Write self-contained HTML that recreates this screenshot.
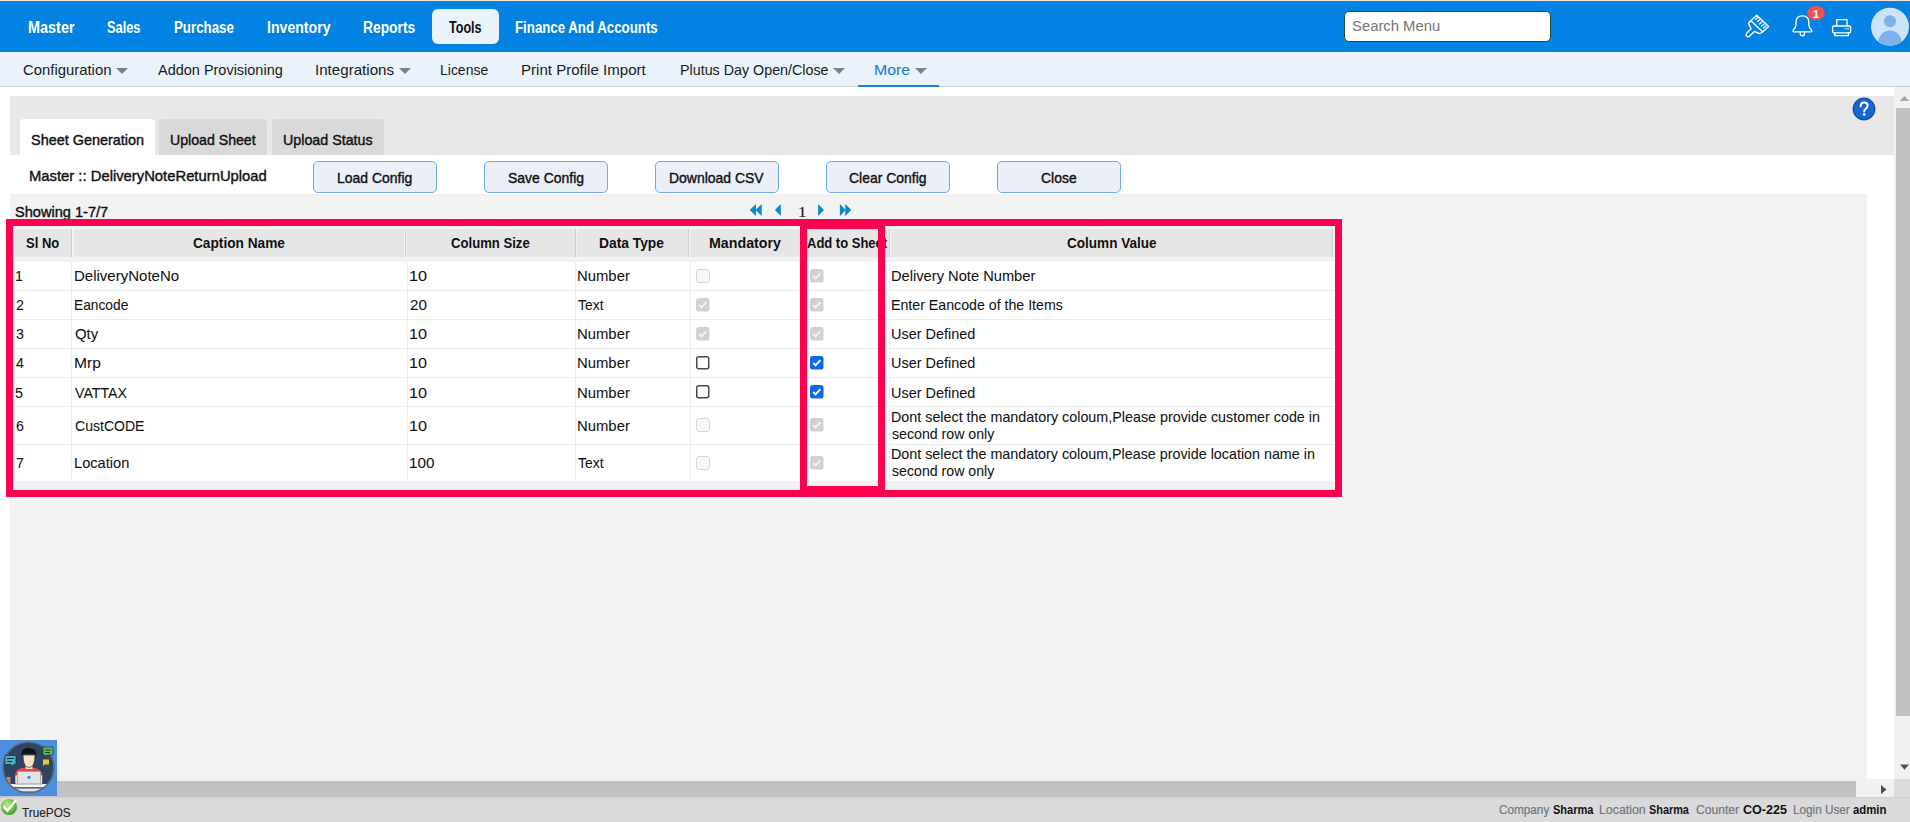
<!DOCTYPE html><html><head><meta charset="utf-8"><style>
*{margin:0;padding:0;box-sizing:border-box}
html,body{width:1910px;height:822px;overflow:hidden;background:#fff;font-family:'Liberation Sans', sans-serif;color:#111}
.ab{position:absolute}
.t{position:absolute;white-space:nowrap;transform-origin:0 0;-webkit-text-stroke:0.4px}
.caret{position:absolute;width:0;height:0;border-left:6.5px solid transparent;border-right:6.5px solid transparent;border-top:6.5px solid #7c808a}
.tab{position:absolute;top:119px;height:36px;border-radius:4px 4px 0 0;background:#d9d9d9}
.btn{position:absolute;top:161px;width:124px;height:32px;border:1px solid #72a8ee;border-radius:5px;background:#eaeff8}
.hc{position:absolute;top:229px;height:28px;background:#e6e6e6}
.hs{position:absolute;top:229px;height:28px;width:1px;background:#cfcfcf}
.red{position:absolute;border:7px solid #ff0050}

</style></head><body>
<div class="ab" style="left:0;top:0;width:1910px;height:1px;background:#efe7dc"></div>
<div class="ab" style="left:0;top:1px;width:1910px;height:51px;background:#0283e3"></div>
<div class="ab" style="left:432px;top:9px;width:67px;height:35px;background:#eaf2fb;border-radius:6px"></div>
<div class="ab" style="left:1344px;top:11px;width:207px;height:31px;background:#fff;border:1px solid #1e5130;border-radius:5px"></div>
<svg class="ab" style="left:1740px;top:2px" width="170" height="48" viewBox="1740 2 170 48">
<g fill="none" stroke="#fff" stroke-width="1.35" stroke-linejoin="round" stroke-linecap="round">
<path d="M1756.7 15.3 L1768.6 26.5 L1762.6 31.9 Q1760.8 33.8 1758.8 33.4 L1754.4 31.4 L1749.6 36 Q1747.8 37.4 1746.6 36 Q1745.6 34.6 1747 32.8 L1751.1 28.7 L1748.9 24.4 Q1748.2 22.6 1750.5 21.1 Z"/>
<path d="M1751.2 21 L1762.6 31.7"/>
<path d="M1755.6 19.3 L1757.9 17.5 M1757.5 21.6 L1759.8 19.7 M1759.5 23.9 L1761.8 22 M1761.6 26.1 L1763.9 24.2 M1763.5 28.1 L1765.9 26.1" stroke-width="1.3"/>
<path d="M1796 25.2 L1796 22 Q1796 15.8 1802.4 15.8 Q1808.8 15.8 1808.8 22 L1808.8 25.2 Q1809.4 28 1811.4 30 Q1812.6 31.8 1810.6 31.8 L1794.2 31.8 Q1792.2 31.8 1793.4 30 Q1795.4 28 1796 25.2 Z"/>
<path d="M1800.3 32.2 L1800.3 33.8 Q1800.3 35.8 1802.4 35.8 Q1804.5 35.8 1804.5 33.8 L1804.5 32.2"/>
<path d="M1836.6 26 L1836.8 19.6 L1847 19.6 L1847.2 26"/>
<path d="M1834 26 L1849.2 26 Q1850.6 26 1850.6 27.5 L1850.6 31.4 Q1850.6 32.8 1849.2 32.8 L1834 32.8 Q1832.6 32.8 1832.6 31.4 L1832.6 27.5 Q1832.6 26 1834 26 Z"/>
<path d="M1834.8 32.8 L1834.8 35.6 L1848.4 35.6 L1848.4 32.8"/>
<path d="M1845.2 28.8 L1845.8 28.8 M1847.4 28.8 L1848.4 28.8" stroke-width="1"/>
</g>
<ellipse cx="1816" cy="13" rx="9" ry="7.2" fill="#f05252"/>
<text x="1816" y="17.5" font-family="Liberation Sans" font-weight="bold" font-size="11" fill="#fff" text-anchor="middle">1</text>
<circle cx="1890" cy="26.8" r="19" fill="#cde3f9"/>
<clipPath id="av"><circle cx="1890" cy="26.8" r="19"/></clipPath>
<circle cx="1890" cy="21.3" r="6" fill="#7db2ea"/>
<ellipse cx="1890" cy="43" rx="11.8" ry="12.5" fill="#7db2ea" clip-path="url(#av)"/>
</svg>
<div class="ab" style="left:0;top:52px;width:1910px;height:35px;background:#eaf2fb;border-bottom:1px solid #c4d4df"></div>
<div class="caret" style="left:115.6px;top:68px"></div>
<div class="caret" style="left:398.8px;top:68px"></div>
<div class="caret" style="left:833px;top:68px"></div>
<div class="caret" style="left:915px;top:68px"></div>
<div class="ab" style="left:858px;top:84.7px;width:81px;height:2.3px;background:#1a80e0"></div>
<div class="ab" style="left:10px;top:96px;width:1884px;height:59px;background:#e8e8e8"></div>
<svg class="ab" style="left:1852px;top:97px" width="25" height="25" viewBox="0 0 25 25"><circle cx="12" cy="12" r="10.8" fill="#1766d1" stroke="#0f4d98" stroke-width="1.2"/><path d="M8.6 9.2 Q8.6 5.6 12.1 5.6 Q15.6 5.6 15.6 8.8 Q15.6 10.6 13.6 11.8 Q12.2 12.6 12.2 14.6" fill="none" stroke="#fff" stroke-width="2" stroke-linecap="round"/><circle cx="12.2" cy="17.6" r="1.25" fill="#fff"/></svg>
<div class="tab" style="left:20px;width:135px;background:#fff"></div>
<div class="tab" style="left:159px;width:108px"></div>
<div class="tab" style="left:272px;width:112px"></div>
<div class="btn" style="left:313px"></div>
<div class="btn" style="left:484px"></div>
<div class="btn" style="left:655px"></div>
<div class="btn" style="left:826px"></div>
<div class="btn" style="left:997px"></div>
<div class="ab" style="left:10px;top:194px;width:1857px;height:586px;background:#f2f2f2"></div>
<div class="ab" style="left:1867px;top:155px;width:27px;height:624px;background:#fff"></div>
<svg class="ab" style="left:740px;top:196px" width="120" height="28" viewBox="740 196 120 28">
<g fill="#078ac9">
<polygon points="749.7,210 756,204 756,216"/><polygon points="755.5,210 761.7,204 761.7,216"/>
<polygon points="774.9,210 780.8,204 780.8,216"/>
<polygon points="823.9,210 818.1,204 818.1,216"/>
<polygon points="845.7,210 839.9,204 839.9,216"/><polygon points="851.2,210 845.3,204 845.3,216"/>
</g></svg>
<div class="hc" style="left:14.6px;width:56.4px"></div>
<div class="hs" style="left:71px"></div>
<div class="hc" style="left:73.8px;width:330.7px"></div>
<div class="hs" style="left:404.5px"></div>
<div class="hc" style="left:406.7px;width:167.90000000000003px"></div>
<div class="hs" style="left:574.6px"></div>
<div class="hc" style="left:576.5px;width:111.0px"></div>
<div class="hs" style="left:687.5px"></div>
<div class="hc" style="left:690.1px;width:109.89999999999998px"></div>
<div class="hs" style="left:800px"></div>
<div class="hc" style="left:803px;width:85.5px"></div>
<div class="hs" style="left:888.5px"></div>
<div class="hc" style="left:890.6px;width:441.4px"></div>
<div class="hs" style="left:1332px"></div>
<div class="ab" style="left:14.6px;top:262px;width:1319px;height:219px;background:#fff"></div>
<div class="ab" style="left:14.6px;top:290px;width:1319px;height:1px;background:#ebebeb"></div>
<div class="ab" style="left:14.6px;top:319px;width:1319px;height:1px;background:#ebebeb"></div>
<div class="ab" style="left:14.6px;top:348px;width:1319px;height:1px;background:#ebebeb"></div>
<div class="ab" style="left:14.6px;top:377px;width:1319px;height:1px;background:#ebebeb"></div>
<div class="ab" style="left:14.6px;top:406px;width:1319px;height:1px;background:#ebebeb"></div>
<div class="ab" style="left:14.6px;top:444px;width:1319px;height:1px;background:#ebebeb"></div>
<div class="ab" style="left:71px;top:262px;width:1px;height:219px;background:#efefef"></div>
<div class="ab" style="left:407px;top:262px;width:1px;height:219px;background:#efefef"></div>
<div class="ab" style="left:575px;top:262px;width:1px;height:219px;background:#efefef"></div>
<div class="ab" style="left:690px;top:262px;width:1px;height:219px;background:#efefef"></div>
<div class="ab" style="left:803px;top:262px;width:1px;height:219px;background:#efefef"></div>
<div class="ab" style="left:889px;top:262px;width:1px;height:219px;background:#efefef"></div>
<svg class="ab" style="left:696px;top:269px" width="14" height="14" viewBox="0 0 14 14"><rect x="0.5" y="0.5" width="13" height="13" rx="2.5" fill="#f7f7f7" stroke="#d6d6d6"/></svg>
<svg class="ab" style="left:810px;top:269px" width="14" height="14" viewBox="0 0 14 14"><rect x="0" y="0" width="13.5" height="13.5" rx="2.5" fill="#d1d1d1"/><path d="M3.2 7 L5.6 9.4 L10.4 4.2" stroke="#f4f4f4" stroke-width="1.8" fill="none"/></svg>
<svg class="ab" style="left:696px;top:298px" width="14" height="14" viewBox="0 0 14 14"><rect x="0" y="0" width="13.5" height="13.5" rx="2.5" fill="#d1d1d1"/><path d="M3.2 7 L5.6 9.4 L10.4 4.2" stroke="#f4f4f4" stroke-width="1.8" fill="none"/></svg>
<svg class="ab" style="left:810px;top:298px" width="14" height="14" viewBox="0 0 14 14"><rect x="0" y="0" width="13.5" height="13.5" rx="2.5" fill="#d1d1d1"/><path d="M3.2 7 L5.6 9.4 L10.4 4.2" stroke="#f4f4f4" stroke-width="1.8" fill="none"/></svg>
<svg class="ab" style="left:696px;top:327px" width="14" height="14" viewBox="0 0 14 14"><rect x="0" y="0" width="13.5" height="13.5" rx="2.5" fill="#d1d1d1"/><path d="M3.2 7 L5.6 9.4 L10.4 4.2" stroke="#f4f4f4" stroke-width="1.8" fill="none"/></svg>
<svg class="ab" style="left:810px;top:327px" width="14" height="14" viewBox="0 0 14 14"><rect x="0" y="0" width="13.5" height="13.5" rx="2.5" fill="#d1d1d1"/><path d="M3.2 7 L5.6 9.4 L10.4 4.2" stroke="#f4f4f4" stroke-width="1.8" fill="none"/></svg>
<svg class="ab" style="left:696px;top:356px" width="14" height="14" viewBox="0 0 14 14"><rect x="0.75" y="0.75" width="12" height="12" rx="2" fill="#fff" stroke="#4a4a4a" stroke-width="1.5"/></svg>
<svg class="ab" style="left:810px;top:356px" width="14" height="14" viewBox="0 0 14 14"><rect x="0" y="0" width="13.5" height="13.5" rx="2.5" fill="#0b68e6"/><path d="M3.2 7 L5.6 9.4 L10.4 4.2" stroke="#fff" stroke-width="1.9" fill="none"/></svg>
<svg class="ab" style="left:696px;top:385px" width="14" height="14" viewBox="0 0 14 14"><rect x="0.75" y="0.75" width="12" height="12" rx="2" fill="#fff" stroke="#4a4a4a" stroke-width="1.5"/></svg>
<svg class="ab" style="left:810px;top:385px" width="14" height="14" viewBox="0 0 14 14"><rect x="0" y="0" width="13.5" height="13.5" rx="2.5" fill="#0b68e6"/><path d="M3.2 7 L5.6 9.4 L10.4 4.2" stroke="#fff" stroke-width="1.9" fill="none"/></svg>
<svg class="ab" style="left:696px;top:418px" width="14" height="14" viewBox="0 0 14 14"><rect x="0.5" y="0.5" width="13" height="13" rx="2.5" fill="#f7f7f7" stroke="#d6d6d6"/></svg>
<svg class="ab" style="left:810px;top:418px" width="14" height="14" viewBox="0 0 14 14"><rect x="0" y="0" width="13.5" height="13.5" rx="2.5" fill="#d1d1d1"/><path d="M3.2 7 L5.6 9.4 L10.4 4.2" stroke="#f4f4f4" stroke-width="1.8" fill="none"/></svg>
<svg class="ab" style="left:696px;top:456px" width="14" height="14" viewBox="0 0 14 14"><rect x="0.5" y="0.5" width="13" height="13" rx="2.5" fill="#f7f7f7" stroke="#d6d6d6"/></svg>
<svg class="ab" style="left:810px;top:456px" width="14" height="14" viewBox="0 0 14 14"><rect x="0" y="0" width="13.5" height="13.5" rx="2.5" fill="#d1d1d1"/><path d="M3.2 7 L5.6 9.4 L10.4 4.2" stroke="#f4f4f4" stroke-width="1.8" fill="none"/></svg>
<div class="ab" style="left:1894px;top:87px;width:16px;height:692px;background:#f1f1f1"></div>
<div class="ab" style="left:1896px;top:108px;width:14px;height:608px;background:#c1c1c1"></div>
<svg class="ab" style="left:1894px;top:96px" width="16" height="683" viewBox="0 0 16 683"><polygon points="5.8,4.9 10.5,0 15.2,4.9" fill="#a3a3a3"/><polygon points="6,668.6 15,668.6 10.5,673.8" fill="#505050"/></svg>
<div class="ab" style="left:0px;top:779px;width:1894px;height:18px;background:#f1f1f1"></div>
<div class="ab" style="left:0px;top:781px;width:1856px;height:16px;background:#c1c1c1"></div>
<svg class="ab" style="left:1878px;top:783px" width="12" height="14" viewBox="0 0 12 14"><polygon points="3,2 8.5,6.6 3,11.2" fill="#505050"/></svg>
<div class="ab" style="left:1894px;top:779px;width:16px;height:18px;background:#dcdcdc"></div>
<div class="ab" style="left:0;top:797px;width:1910px;height:25px;background:#dadada;border-top:1px solid #cfcfcf"></div>
<svg class="ab" style="left:0px;top:798px" width="18" height="18" viewBox="0 0 18 18"><defs><radialGradient id="gc" cx="0.4" cy="0.35" r="0.7"><stop offset="0" stop-color="#b8f08a"/><stop offset="1" stop-color="#3a9a1c"/></radialGradient></defs><circle cx="9" cy="9" r="8" fill="url(#gc)"/><path d="M4 9 L7.5 12.5 L15 3.5" stroke="#fff" stroke-width="2.6" fill="none" stroke-linecap="round"/></svg>
<svg class="ab" style="left:0;top:740px" width="57" height="56" viewBox="0 0 57 56">
<rect width="57" height="56" fill="#4b8fde"/>
<circle cx="28.5" cy="27.5" r="25.3" fill="#2e4461" stroke="#5a687d" stroke-width="1.6"/>
<clipPath id="cc"><circle cx="28.5" cy="27.5" r="24.6"/></clipPath>
<g clip-path="url(#cc)">
<rect x="8" y="44" width="41" height="3.2" fill="#f4f4f4"/><rect x="8" y="48.5" width="41" height="3" fill="#e6e6e6"/>
<path d="M14.5 37 Q15 29 22 28 L35 28 Q42 29 43 37 Z" fill="#e24848"/>
<rect x="25.5" y="24" width="7" height="5" fill="#f3dcc0"/>
<path d="M23 15 Q23 27 29 27.5 Q35 27 35 15 Z" fill="#f6e2c6" stroke="#222" stroke-width="0.6"/>
<path d="M21.5 16 Q21 8.5 26 8.5 L28 7.5 L30 8.5 Q36.5 8 36.5 16 L35 14 Q30 13.5 23.5 14 Z" fill="#121212"/>
<rect x="15" y="35" width="3" height="9" rx="1" fill="#f3dcc0" stroke="#222" stroke-width="0.4"/>
<rect x="39.5" y="35" width="3" height="9" rx="1" fill="#f3dcc0" stroke="#222" stroke-width="0.4"/>
<rect x="17.5" y="31.5" width="23" height="12.5" rx="1" fill="#dfe3e8" stroke="#8a93a0" stroke-width="0.6"/>
<rect x="16" y="43" width="26" height="1.6" fill="#b9bec6"/>
<ellipse cx="29" cy="37.5" rx="1.8" ry="1.4" fill="#3b86e0"/>
<rect x="6.5" y="37" width="4" height="7" fill="#e07a4e"/>
</g>
<path d="M5 15.5 H16 V24.5 H13.5 L13 27 L11 24.5 H5 Z" fill="#49afc9" stroke="#1d2b3a" stroke-width="0.7"/>
<path d="M7 18.5 H14 M7 21.5 H12" stroke="#1d2b3a" stroke-width="1"/>
<path d="M43 7 H53 V15 H47 L45 17.5 L45 15 H43 Z" fill="#5fbf4a" stroke="#1d2b3a" stroke-width="0.7"/>
<path d="M45 10 H51 M45 12.5 H50" stroke="#1d2b3a" stroke-width="0.9"/>
<path d="M43 19.5 H49 V24.5 H44.5 L43 26 Z" fill="#e9c53e"/>
</svg>
<div class="t" style="left:27.80px;top:20px;font-size:16px;line-height:16px;font-weight:bold;color:#fff;font-family:'Liberation Sans', sans-serif;transform:scaleX(0.9020);-webkit-text-stroke:0">Master</div>
<div class="t" style="left:107.40px;top:20px;font-size:16px;line-height:16px;font-weight:bold;color:#fff;font-family:'Liberation Sans', sans-serif;transform:scaleX(0.8000);-webkit-text-stroke:0">Sales</div>
<div class="t" style="left:173.97px;top:20px;font-size:16px;line-height:16px;font-weight:bold;color:#fff;font-family:'Liberation Sans', sans-serif;transform:scaleX(0.8310);-webkit-text-stroke:0">Purchase</div>
<div class="t" style="left:267.02px;top:20px;font-size:16px;line-height:16px;font-weight:bold;color:#fff;font-family:'Liberation Sans', sans-serif;transform:scaleX(0.8817);-webkit-text-stroke:0">Inventory</div>
<div class="t" style="left:363.04px;top:20px;font-size:16px;line-height:16px;font-weight:bold;color:#fff;font-family:'Liberation Sans', sans-serif;transform:scaleX(0.8627);-webkit-text-stroke:0">Reports</div>
<div class="t" style="left:448.90px;top:20px;font-size:16px;line-height:16px;font-weight:bold;color:#111;font-family:'Liberation Sans', sans-serif;transform:scaleX(0.7854);-webkit-text-stroke:0">Tools</div>
<div class="t" style="left:515.17px;top:20px;font-size:16px;line-height:16px;font-weight:bold;color:#fff;font-family:'Liberation Sans', sans-serif;transform:scaleX(0.8287);-webkit-text-stroke:0">Finance And Accounts</div>
<div class="t" style="left:1352.21px;top:18px;font-size:15px;line-height:15px;font-weight:normal;color:#757575;font-family:'Liberation Sans', sans-serif;transform:scaleX(0.9885);-webkit-text-stroke:0">Search Menu</div>
<div class="t" style="left:22.80px;top:62px;font-size:15px;line-height:15px;font-weight:normal;color:#1b1b1b;font-family:'Liberation Sans', sans-serif;transform:scaleX(0.9910);-webkit-text-stroke:0">Configuration</div>
<div class="t" style="left:157.50px;top:62px;font-size:15px;line-height:15px;font-weight:normal;color:#1b1b1b;font-family:'Liberation Sans', sans-serif;transform:scaleX(0.9651);-webkit-text-stroke:0">Addon Provisioning</div>
<div class="t" style="left:315.19px;top:62px;font-size:15px;line-height:15px;font-weight:normal;color:#1b1b1b;font-family:'Liberation Sans', sans-serif;transform:scaleX(1.0091);-webkit-text-stroke:0">Integrations</div>
<div class="t" style="left:439.87px;top:62px;font-size:15px;line-height:15px;font-weight:normal;color:#1b1b1b;font-family:'Liberation Sans', sans-serif;transform:scaleX(0.9320);-webkit-text-stroke:0">License</div>
<div class="t" style="left:521.20px;top:62px;font-size:15px;line-height:15px;font-weight:normal;color:#1b1b1b;font-family:'Liberation Sans', sans-serif;transform:scaleX(1.0041);-webkit-text-stroke:0">Print Profile Import</div>
<div class="t" style="left:679.65px;top:62px;font-size:15px;line-height:15px;font-weight:normal;color:#1b1b1b;font-family:'Liberation Sans', sans-serif;transform:scaleX(0.9529);-webkit-text-stroke:0">Plutus Day Open/Close</div>
<div class="t" style="left:873.75px;top:62px;font-size:15px;line-height:15px;font-weight:normal;color:#1c7edc;font-family:'Liberation Sans', sans-serif;transform:scaleX(1.0545);-webkit-text-stroke:0.1px">More</div>
<div class="t" style="left:30.84px;top:132px;font-size:15px;line-height:15px;font-weight:normal;color:#111;font-family:'Liberation Sans', sans-serif;transform:scaleX(0.9621);">Sheet Generation</div>
<div class="t" style="left:169.96px;top:132px;font-size:15px;line-height:15px;font-weight:normal;color:#111;font-family:'Liberation Sans', sans-serif;transform:scaleX(0.9422);">Upload Sheet</div>
<div class="t" style="left:282.85px;top:132px;font-size:15px;line-height:15px;font-weight:normal;color:#111;font-family:'Liberation Sans', sans-serif;transform:scaleX(0.9516);">Upload Status</div>
<div class="t" style="left:28.51px;top:168px;font-size:15px;line-height:15px;font-weight:normal;color:#111;font-family:'Liberation Sans', sans-serif;transform:scaleX(0.9870);">Master :: DeliveryNoteReturnUpload</div>
<div class="t" style="left:337.33px;top:170px;font-size:15px;line-height:15px;font-weight:normal;color:#111;font-family:'Liberation Sans', sans-serif;transform:scaleX(0.9300);">Load Config</div>
<div class="t" style="left:507.87px;top:170px;font-size:15px;line-height:15px;font-weight:normal;color:#111;font-family:'Liberation Sans', sans-serif;transform:scaleX(0.9300);">Save Config</div>
<div class="t" style="left:669.11px;top:170px;font-size:15px;line-height:15px;font-weight:normal;color:#111;font-family:'Liberation Sans', sans-serif;transform:scaleX(0.9300);">Download CSV</div>
<div class="t" style="left:849.40px;top:170px;font-size:15px;line-height:15px;font-weight:normal;color:#111;font-family:'Liberation Sans', sans-serif;transform:scaleX(0.9300);">Clear Config</div>
<div class="t" style="left:1041.33px;top:170px;font-size:15px;line-height:15px;font-weight:normal;color:#111;font-family:'Liberation Sans', sans-serif;transform:scaleX(0.9300);">Close</div>
<div class="t" style="left:14.73px;top:204px;font-size:15px;line-height:15px;font-weight:normal;color:#111;font-family:'Liberation Sans', sans-serif;transform:scaleX(0.9716);">Showing 1-7/7</div>
<div class="t" style="left:798.07px;top:205px;font-size:15px;line-height:15px;font-weight:normal;color:#111;font-family:'Liberation Serif', serif;transform:scaleX(1.1333);-webkit-text-stroke:0.1px">1</div>
<div class="t" style="left:25.90px;top:236px;font-size:14px;line-height:14px;font-weight:bold;color:#111;font-family:'Liberation Sans', sans-serif;transform:scaleX(0.9278);-webkit-text-stroke:0">Sl No</div>
<div class="t" style="left:193.00px;top:236px;font-size:14px;line-height:14px;font-weight:bold;color:#111;font-family:'Liberation Sans', sans-serif;transform:scaleX(0.9766);-webkit-text-stroke:0">Caption Name</div>
<div class="t" style="left:451.20px;top:236px;font-size:14px;line-height:14px;font-weight:bold;color:#111;font-family:'Liberation Sans', sans-serif;transform:scaleX(0.9369);-webkit-text-stroke:0">Column Size</div>
<div class="t" style="left:598.81px;top:236px;font-size:14px;line-height:14px;font-weight:bold;color:#111;font-family:'Liberation Sans', sans-serif;transform:scaleX(0.9862);-webkit-text-stroke:0">Data Type</div>
<div class="t" style="left:709.48px;top:236px;font-size:14px;line-height:14px;font-weight:bold;color:#111;font-family:'Liberation Sans', sans-serif;transform:scaleX(1.0157);-webkit-text-stroke:0">Mandatory</div>
<div class="t" style="left:806.70px;top:236px;font-size:14px;line-height:14px;font-weight:bold;color:#111;font-family:'Liberation Sans', sans-serif;transform:scaleX(0.9276);-webkit-text-stroke:0">Add to Sheet</div>
<div class="t" style="left:1067.10px;top:236px;font-size:14px;line-height:14px;font-weight:bold;color:#111;font-family:'Liberation Sans', sans-serif;transform:scaleX(0.9674);-webkit-text-stroke:0">Column Value</div>
<div class="t" style="left:15.05px;top:268px;font-size:15px;line-height:15px;font-weight:normal;color:#111;font-family:'Liberation Sans', sans-serif;transform:scaleX(0.9500);-webkit-text-stroke:0.05px">1</div>
<div class="t" style="left:74.20px;top:268px;font-size:15px;line-height:15px;font-weight:normal;color:#111;font-family:'Liberation Sans', sans-serif;transform:scaleX(1.0010);-webkit-text-stroke:0.05px">DeliveryNoteNo</div>
<div class="t" style="left:408.82px;top:268px;font-size:15px;line-height:15px;font-weight:normal;color:#111;font-family:'Liberation Sans', sans-serif;transform:scaleX(1.0800);-webkit-text-stroke:0.05px">10</div>
<div class="t" style="left:577.31px;top:268px;font-size:15px;line-height:15px;font-weight:normal;color:#111;font-family:'Liberation Sans', sans-serif;transform:scaleX(0.9904);-webkit-text-stroke:0.05px">Number</div>
<div class="t" style="left:891.12px;top:268px;font-size:15px;line-height:15px;font-weight:normal;color:#111;font-family:'Liberation Sans', sans-serif;transform:scaleX(0.9782);-webkit-text-stroke:0.05px">Delivery Note Number</div>
<div class="t" style="left:16.00px;top:297px;font-size:15px;line-height:15px;font-weight:normal;color:#111;font-family:'Liberation Sans', sans-serif;transform:scaleX(0.9500);-webkit-text-stroke:0.05px">2</div>
<div class="t" style="left:74.28px;top:297px;font-size:15px;line-height:15px;font-weight:normal;color:#111;font-family:'Liberation Sans', sans-serif;transform:scaleX(0.9172);-webkit-text-stroke:0.05px">Eancode</div>
<div class="t" style="left:409.90px;top:297px;font-size:15px;line-height:15px;font-weight:normal;color:#111;font-family:'Liberation Sans', sans-serif;transform:scaleX(1.0125);-webkit-text-stroke:0.05px">20</div>
<div class="t" style="left:578.30px;top:297px;font-size:15px;line-height:15px;font-weight:normal;color:#111;font-family:'Liberation Sans', sans-serif;transform:scaleX(0.9286);-webkit-text-stroke:0.05px">Text</div>
<div class="t" style="left:891.15px;top:297px;font-size:15px;line-height:15px;font-weight:normal;color:#111;font-family:'Liberation Sans', sans-serif;transform:scaleX(0.9453);-webkit-text-stroke:0.05px">Enter Eancode of the Items</div>
<div class="t" style="left:16.00px;top:326px;font-size:15px;line-height:15px;font-weight:normal;color:#111;font-family:'Liberation Sans', sans-serif;transform:scaleX(0.9500);-webkit-text-stroke:0.05px">3</div>
<div class="t" style="left:75.20px;top:326px;font-size:15px;line-height:15px;font-weight:normal;color:#111;font-family:'Liberation Sans', sans-serif;transform:scaleX(0.9957);-webkit-text-stroke:0.05px">Qty</div>
<div class="t" style="left:408.82px;top:326px;font-size:15px;line-height:15px;font-weight:normal;color:#111;font-family:'Liberation Sans', sans-serif;transform:scaleX(1.0800);-webkit-text-stroke:0.05px">10</div>
<div class="t" style="left:577.31px;top:326px;font-size:15px;line-height:15px;font-weight:normal;color:#111;font-family:'Liberation Sans', sans-serif;transform:scaleX(0.9904);-webkit-text-stroke:0.05px">Number</div>
<div class="t" style="left:891.14px;top:326px;font-size:15px;line-height:15px;font-weight:normal;color:#111;font-family:'Liberation Sans', sans-serif;transform:scaleX(0.9628);-webkit-text-stroke:0.05px">User Defined</div>
<div class="t" style="left:16.00px;top:355px;font-size:15px;line-height:15px;font-weight:normal;color:#111;font-family:'Liberation Sans', sans-serif;transform:scaleX(0.9500);-webkit-text-stroke:0.05px">4</div>
<div class="t" style="left:74.16px;top:355px;font-size:15px;line-height:15px;font-weight:normal;color:#111;font-family:'Liberation Sans', sans-serif;transform:scaleX(1.0400);-webkit-text-stroke:0.05px">Mrp</div>
<div class="t" style="left:408.82px;top:355px;font-size:15px;line-height:15px;font-weight:normal;color:#111;font-family:'Liberation Sans', sans-serif;transform:scaleX(1.0800);-webkit-text-stroke:0.05px">10</div>
<div class="t" style="left:577.31px;top:355px;font-size:15px;line-height:15px;font-weight:normal;color:#111;font-family:'Liberation Sans', sans-serif;transform:scaleX(0.9904);-webkit-text-stroke:0.05px">Number</div>
<div class="t" style="left:891.14px;top:355px;font-size:15px;line-height:15px;font-weight:normal;color:#111;font-family:'Liberation Sans', sans-serif;transform:scaleX(0.9628);-webkit-text-stroke:0.05px">User Defined</div>
<div class="t" style="left:15.05px;top:385px;font-size:15px;line-height:15px;font-weight:normal;color:#111;font-family:'Liberation Sans', sans-serif;transform:scaleX(0.9500);-webkit-text-stroke:0.05px">5</div>
<div class="t" style="left:75.20px;top:385px;font-size:15px;line-height:15px;font-weight:normal;color:#111;font-family:'Liberation Sans', sans-serif;transform:scaleX(0.9436);-webkit-text-stroke:0.05px">VATTAX</div>
<div class="t" style="left:408.82px;top:385px;font-size:15px;line-height:15px;font-weight:normal;color:#111;font-family:'Liberation Sans', sans-serif;transform:scaleX(1.0800);-webkit-text-stroke:0.05px">10</div>
<div class="t" style="left:577.31px;top:385px;font-size:15px;line-height:15px;font-weight:normal;color:#111;font-family:'Liberation Sans', sans-serif;transform:scaleX(0.9904);-webkit-text-stroke:0.05px">Number</div>
<div class="t" style="left:891.14px;top:385px;font-size:15px;line-height:15px;font-weight:normal;color:#111;font-family:'Liberation Sans', sans-serif;transform:scaleX(0.9628);-webkit-text-stroke:0.05px">User Defined</div>
<div class="t" style="left:16.00px;top:418px;font-size:15px;line-height:15px;font-weight:normal;color:#111;font-family:'Liberation Sans', sans-serif;transform:scaleX(0.9500);-webkit-text-stroke:0.05px">6</div>
<div class="t" style="left:75.20px;top:418px;font-size:15px;line-height:15px;font-weight:normal;color:#111;font-family:'Liberation Sans', sans-serif;transform:scaleX(0.9365);-webkit-text-stroke:0.05px">CustCODE</div>
<div class="t" style="left:408.82px;top:418px;font-size:15px;line-height:15px;font-weight:normal;color:#111;font-family:'Liberation Sans', sans-serif;transform:scaleX(1.0800);-webkit-text-stroke:0.05px">10</div>
<div class="t" style="left:577.31px;top:418px;font-size:15px;line-height:15px;font-weight:normal;color:#111;font-family:'Liberation Sans', sans-serif;transform:scaleX(0.9904);-webkit-text-stroke:0.05px">Number</div>
<div class="t" style="left:891.15px;top:409px;font-size:15px;line-height:15px;font-weight:normal;color:#111;font-family:'Liberation Sans', sans-serif;transform:scaleX(0.9545);-webkit-text-stroke:0.05px">Dont select the mandatory coloum,Please provide customer code in</div>
<div class="t" style="left:892.10px;top:426px;font-size:15px;line-height:15px;font-weight:normal;color:#111;font-family:'Liberation Sans', sans-serif;transform:scaleX(0.9440);-webkit-text-stroke:0.05px">second row only</div>
<div class="t" style="left:16.00px;top:455px;font-size:15px;line-height:15px;font-weight:normal;color:#111;font-family:'Liberation Sans', sans-serif;transform:scaleX(0.9500);-webkit-text-stroke:0.05px">7</div>
<div class="t" style="left:74.23px;top:455px;font-size:15px;line-height:15px;font-weight:normal;color:#111;font-family:'Liberation Sans', sans-serif;transform:scaleX(0.9745);-webkit-text-stroke:0.05px">Location</div>
<div class="t" style="left:408.88px;top:455px;font-size:15px;line-height:15px;font-weight:normal;color:#111;font-family:'Liberation Sans', sans-serif;transform:scaleX(1.0208);-webkit-text-stroke:0.05px">100</div>
<div class="t" style="left:578.30px;top:455px;font-size:15px;line-height:15px;font-weight:normal;color:#111;font-family:'Liberation Sans', sans-serif;transform:scaleX(0.9286);-webkit-text-stroke:0.05px">Text</div>
<div class="t" style="left:891.15px;top:446px;font-size:15px;line-height:15px;font-weight:normal;color:#111;font-family:'Liberation Sans', sans-serif;transform:scaleX(0.9537);-webkit-text-stroke:0.05px">Dont select the mandatory coloum,Please provide location name in</div>
<div class="t" style="left:892.10px;top:463px;font-size:15px;line-height:15px;font-weight:normal;color:#111;font-family:'Liberation Sans', sans-serif;transform:scaleX(0.9440);-webkit-text-stroke:0.05px">second row only</div>
<div class="t" style="left:21.70px;top:807px;font-size:12px;line-height:12px;font-weight:normal;color:#222;font-family:'Liberation Sans', sans-serif;transform:scaleX(0.9816);-webkit-text-stroke:0.1px">TruePOS</div>
<div class="t" style="left:1498.80px;top:803px;font-size:13px;line-height:13px;font-weight:normal;color:#717684;font-family:'Liberation Sans', sans-serif;transform:scaleX(0.9036);-webkit-text-stroke:0.2px">Company</div>
<div class="t" style="left:1552.70px;top:803px;font-size:13px;line-height:13px;font-weight:bold;color:#111;font-family:'Liberation Sans', sans-serif;transform:scaleX(0.8479);-webkit-text-stroke:0">Sharma</div>
<div class="t" style="left:1599.05px;top:803px;font-size:13px;line-height:13px;font-weight:normal;color:#717684;font-family:'Liberation Sans', sans-serif;transform:scaleX(0.9500);-webkit-text-stroke:0.2px">Location</div>
<div class="t" style="left:1648.90px;top:803px;font-size:13px;line-height:13px;font-weight:bold;color:#111;font-family:'Liberation Sans', sans-serif;transform:scaleX(0.8354);-webkit-text-stroke:0">Sharma</div>
<div class="t" style="left:1695.70px;top:803px;font-size:13px;line-height:13px;font-weight:normal;color:#717684;font-family:'Liberation Sans', sans-serif;transform:scaleX(0.9319);-webkit-text-stroke:0.2px">Counter</div>
<div class="t" style="left:1743.30px;top:803px;font-size:13px;line-height:13px;font-weight:bold;color:#111;font-family:'Liberation Sans', sans-serif;transform:scaleX(0.9667);-webkit-text-stroke:0">CO-225</div>
<div class="t" style="left:1792.50px;top:803px;font-size:13px;line-height:13px;font-weight:normal;color:#717684;font-family:'Liberation Sans', sans-serif;transform:scaleX(0.9032);-webkit-text-stroke:0.2px">Login User</div>
<div class="t" style="left:1852.70px;top:803px;font-size:13px;line-height:13px;font-weight:bold;color:#111;font-family:'Liberation Sans', sans-serif;transform:scaleX(0.8737);-webkit-text-stroke:0">admin</div>
<div class="red" style="left:6px;top:219px;width:801px;height:278px"></div>
<div class="red" style="left:800px;top:219px;width:85px;height:278px;border-top-width:10.2px;border-bottom-width:11.4px"></div>
<div class="red" style="left:878px;top:219px;width:464px;height:278px"></div>
</body></html>
